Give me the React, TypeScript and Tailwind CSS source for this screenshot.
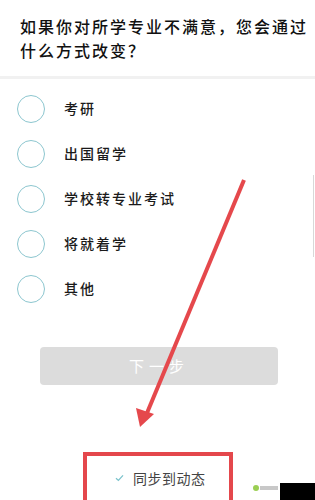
import React from "react";

const options = ["考研", "出国留学", "学校转专业考试", "将就着学", "其他"];

export default function App() {
  return (
    <div
      className="relative w-[315px] h-[500px] overflow-hidden bg-white"
      style={{ fontFamily: '"Noto Sans CJK SC", "Noto Sans", sans-serif' }}
    >
      <div className="pl-[20px] pr-[6px] pt-[14px] pb-[14px] text-[16px] leading-[24px] tracking-[2px] text-[#111] font-medium">
        如果你对所学专业不满意，您会通过什么方式改变？
      </div>
      <div className="h-[3px] bg-[#f1f1f1]" />
      <div className="flex flex-col pt-[7px]">
        {options.map((o) => (
          <div key={o} className="flex items-center h-[45px] pl-[17px]">
            <div className="w-[28px] h-[28px] rounded-full border-[1.5px] border-[#8cc6cf]" />
            <span className="ml-[19px] text-[14px] tracking-[2px] text-[#1a1a1a] font-medium">
              {o}
            </span>
          </div>
        ))}
      </div>
      <div className="mt-[36px] mx-[40px] w-[238px] h-[38px] rounded-[4px] bg-[#dcdcdc] flex items-center justify-center text-white text-[15px] tracking-[5px]">
        下一步
      </div>
      <div className="mt-[67px] ml-[83px] w-[150px] h-[56px] border-4 border-[#e4474c] flex items-start pt-[12px] pl-[28px]">
        <svg width="9" height="8" viewBox="0 0 9 8" className="mt-[6px]">
          <path d="M1 4.2 L3.4 6.4 L8 1.4" fill="none" stroke="#7cc3cc" strokeWidth="1.3" />
        </svg>
        <span className="ml-[9px] text-[14px] tracking-[0.5px] text-[#444]">同步到动态</span>
      </div>

      {/* red annotation arrow */}
      <svg className="absolute left-0 top-0 pointer-events-none" width="315" height="500">
        <line x1="244" y1="180" x2="147" y2="413" stroke="#e5484c" strokeWidth="4" />
        <polygon points="140,427 136,408 154,414" fill="#e5484c" />
      </svg>

      {/* scrollbar */}
      <div className="absolute right-[1px] top-[175px] w-[1.5px] h-[82px] bg-[#d8d8d8]" />

      {/* watermark */}
      <div className="absolute right-0 bottom-0 flex items-end">
        <div className="flex items-center h-[9px] mb-[8px] pr-[2px]">
          <div className="w-[6px] h-[6px] rounded-full bg-[#9bcf53]" />
          <div className="w-[18px] h-[4px] ml-[1px] bg-[#c8c8c8]" />
        </div>
        <div className="w-[35px] h-[17px] bg-black" />
      </div>
    </div>
  );
}
